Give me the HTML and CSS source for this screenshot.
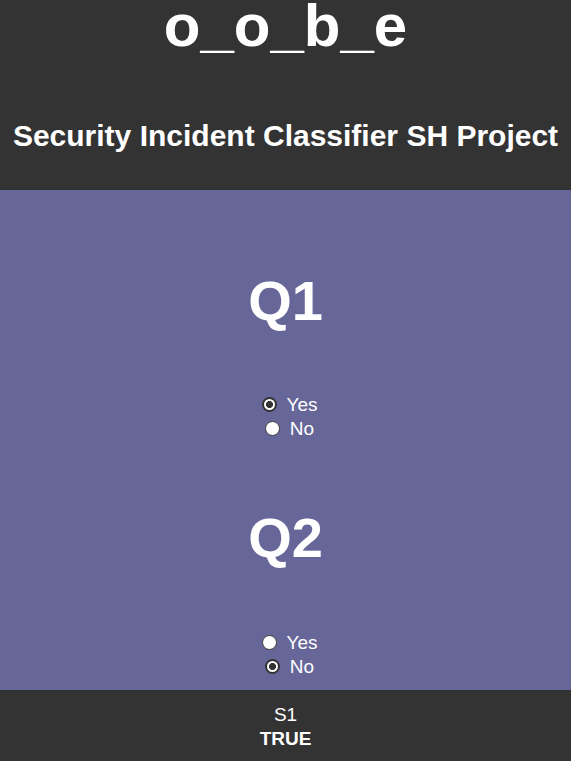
FILE: index.html
```html
<!DOCTYPE html>
<html>
<head>
<meta charset="utf-8">
<link rel="stylesheet" href="styles.css">
</head>
<body>
<header class="top">
  <h1 class="brand">o_o_b_e</h1>
  <h2 class="subtitle">Security Incident Classifier SH Project</h2>
</header>
<main class="questions">
  <section class="question q1">
    <h2 class="qtitle">Q1</h2>
    <form class="options">
      <label class="opt"><input type="radio" name="q1" checked> Yes</label>
      <label class="opt"><input type="radio" name="q1"> No</label>
    </form>
  </section>
  <section class="question q2">
    <h2 class="qtitle">Q2</h2>
    <form class="options">
      <label class="opt"><input type="radio" name="q2"> Yes</label>
      <label class="opt"><input type="radio" name="q2" checked> No</label>
    </form>
  </section>
</main>
<footer class="bottom">
  <div class="res-name">S1</div>
  <div class="res-val">TRUE</div>
</footer>
</body>
</html>
```
FILE: styles.css
```css
html, body {
  margin: 0;
  padding: 0;
  background: #333333;
}
body {
  font-family: "Liberation Sans", Arial, sans-serif;
  color: #ffffff;
  text-align: center;
}
.top {
  background: #333333;
  height: 190px;
  box-sizing: border-box;
}
.brand {
  margin: 0;
  font-size: 60px;
  line-height: 52px;
  font-weight: bold;
}
.subtitle {
  margin: 67px 0 0;
  font-size: 30px;
  line-height: 34px;
  font-weight: bold;
}
.questions {
  background: #666699;
  height: 500px;
  box-sizing: border-box;
  padding-top: 79px;
}
.question + .question {
  margin-top: 65px;
}
.qtitle {
  margin: 0;
  font-size: 56px;
  line-height: 64px;
  font-weight: bold;
}
.options {
  margin-top: 60px;
  display: flex;
  flex-direction: column;
  align-items: center;
}
.q2 .options {
  margin-top: 61px;
}
.opt {
  font-size: 19px;
  line-height: 24px;
  display: flex;
  align-items: center;
  padding-left: 8px;
}
.opt input {
  -webkit-appearance: none;
  appearance: none;
  box-sizing: border-box;
  width: 15px;
  height: 15px;
  margin: 0 10px 1px 0;
  border: 1px solid #3a3a3a;
  border-radius: 50%;
  background: #ffffff;
}
.opt input:checked {
  border: 2px solid #333333;
  background: radial-gradient(circle, #333333 0 3.2px, #ffffff 3.8px);
}
.bottom {
  height: 71px;
  box-sizing: border-box;
  padding-top: 13px;
  font-size: 19px;
  line-height: 24px;
}
.res-val {
  font-weight: bold;
}
```
